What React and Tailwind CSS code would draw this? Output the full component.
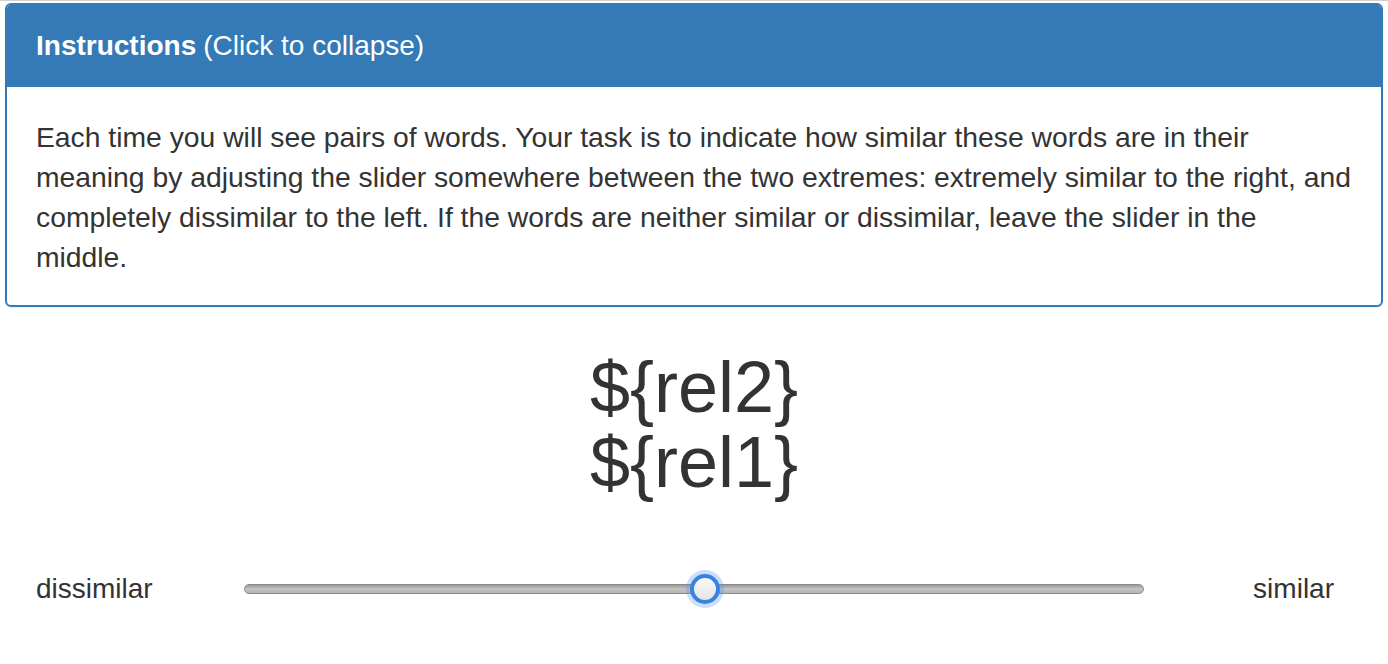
export default function App() {
  return (
    <div className="w-[1388px] h-[664px] bg-white text-[#333] font-['Liberation_Sans',Arial,sans-serif] border-t border-[#d0d0d0]">
      <div className="mx-[5px] mt-[2px] rounded-[6px] border-2 border-[#337ab7] overflow-hidden shadow-[0_1px_2px_rgba(0,0,0,0.08)]">
        <div className="bg-[#337ab7] h-[82px] px-[29px] flex items-center text-white text-[28px]">
          <span className="font-bold">Instructions</span>
          <span className="ml-[7px]">(Click to collapse)</span>
        </div>
        <div className="pl-[29px] pr-[10px] pt-[30px] pb-[28px] text-[28.3px] leading-[40px]">
          Each time you will see pairs of words. Your task is to indicate how similar these words are in their
          <br />
          meaning by adjusting the slider somewhere between the two extremes: extremely similar to the right, and
          <br />
          completely dissimilar to the left. If the words are neither similar or dissimilar, leave the slider in the
          <br />
          middle.
        </div>
      </div>

      <div className="mt-[43px] flex flex-col items-center text-[72px] leading-[75px]">
        <div>{"${rel2}"}</div>
        <div>{"${rel1}"}</div>
      </div>

      <div className="mt-[68px] flex items-center pl-[36px] pr-[54px] text-[28px]">
        <span className="w-[208px]">dissimilar</span>
        <div className="relative w-[900px] h-[10px] rounded-full border border-[#8a8a8a] bg-gradient-to-b from-[#9a9a9a] via-[#c4c4c4] to-[#b4b4b4]">
          <div className="absolute left-[460px] top-1/2 -translate-x-1/2 -translate-y-1/2 w-[38px] h-[38px] rounded-full bg-[rgba(80,150,240,0.3)] flex items-center justify-center">
            <div className="w-[30px] h-[30px] rounded-full border-[4px] border-[#3b82e0] bg-gradient-to-b from-[#fafafa] to-[#e4e4e4]" />
          </div>
        </div>
        <span className="ml-auto">similar</span>
      </div>
    </div>
  );
}
